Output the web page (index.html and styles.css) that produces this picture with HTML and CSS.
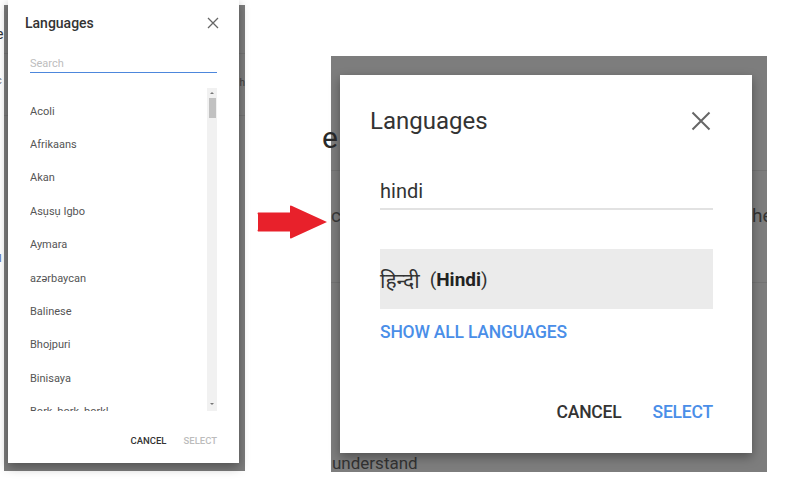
FILE: index.html
```html
<!DOCTYPE html>
<html lang="en">
<head>
<meta charset="utf-8">
<title>Languages dialog</title>
<link rel="stylesheet" href="styles.css">
</head>
<body>
<main class="stage">
  <span class="scrap scrap-e">e</span>
  <span class="scrap scrap-c">c</span>
  <span class="scrap scrap-blue">l</span>

  <section class="shot shot-small">
    <div class="backdrop backdrop-small">
      <span class="rule rule-s1"></span>
      <span class="rule rule-s2"></span>
      <span class="scrap scrap-he-small">h</span>
      <div class="dialog dialog-small">
        <header class="sd-head">
          <h2 class="sd-title">Languages</h2>
          <svg class="sd-close" width="12" height="12" viewBox="0 0 12 12" aria-hidden="true"><path d="M1 1L11 11M11 1L1 11" stroke="#666" stroke-width="1.3" fill="none"/></svg>
        </header>
        <div class="sd-search">Search</div>
        <div class="sd-listwrap">
          <ul class="sd-list">
            <li>Acoli</li>
            <li>Afrikaans</li>
            <li>Akan</li>
            <li>Asụsụ Igbo</li>
            <li>Aymara</li>
            <li>azərbaycan</li>
            <li>Balinese</li>
            <li>Bhojpuri</li>
            <li>Binisaya</li>
            <li>Bork, bork, bork!</li>
          </ul>
          <div class="sd-scrollbar">
            <span class="sb-up"></span>
            <span class="sb-thumb"></span>
            <span class="sb-down"></span>
          </div>
        </div>
        <footer class="sd-foot">
          <span class="sd-btn sd-cancel">CANCEL</span>
          <span class="sd-btn sd-select">SELECT</span>
        </footer>
      </div>
    </div>
  </section>

  <div class="arrow">
    <svg width="70" height="34" viewBox="0 0 70 34" aria-hidden="true">
      <path d="M1 9.5 Q0 8.5 1 7.5 L33 7.5 L33 1.5 Q33 0 34.5 0.8 L70 17 L34.5 33.2 Q33 34 33 32.5 L33 26.5 L1 26.5 Q0 25.5 1 24.5 Z" fill="#e8212b"/>
    </svg>
  </div>

  <section class="shot shot-large">
    <div class="backdrop backdrop-large">
      <span class="rule rule-l1"></span>
      <span class="rule rule-l2"></span>
      <span class="scrap scrap-big-e">e</span>
      <span class="scrap scrap-big-c">c</span>
      <span class="scrap scrap-big-he">he</span>
      <div class="dialog dialog-large">
        <header class="ld-head">
          <h2 class="ld-title">Languages</h2>
          <svg class="ld-close" width="24" height="24" viewBox="0 0 24 24" aria-hidden="true"><path d="M3.5 3.5L20.5 20.5M20.5 3.5L3.5 20.5" stroke="#666" stroke-width="2" fill="none"/></svg>
        </header>
        <div class="ld-input">hindi</div>
        <div class="ld-result"><span class="deva">हिन्दी</span>(<b>Hindi</b>)</div>
        <div class="ld-showall">SHOW ALL LANGUAGES</div>
        <footer class="ld-foot">
          <span class="ld-btn ld-cancel">CANCEL</span>
          <span class="ld-btn ld-select">SELECT</span>
        </footer>
      </div>
      <span class="understand">understand</span>
    </div>
  </section>
</main>
</body>
</html>
```
FILE: styles.css
```css
* { box-sizing: border-box; }
html, body { margin: 0; padding: 0; background: #fff; }
body {
  width: 785px;
  height: 486px;
  overflow: hidden;
  font-family: Roboto, "Noto Sans", "Liberation Sans", sans-serif;
}
.stage {
  position: relative;
  display: flex;
  align-items: flex-start;
  width: 785px;
  height: 486px;
}
h2 { margin: 0; font-weight: 400; }
ul { margin: 0; padding: 0; list-style: none; }

/* ---------- backdrop scraps (obscured page) ---------- */
.scrap { position: absolute; color: #333; white-space: nowrap; }
.scrap-e { left: -4px; top: 26px; font-size: 14px; }
.scrap-c { left: -4px; top: 74px; font-size: 11px; color: #777; }
.scrap-blue { left: -1px; top: 252px; font-size: 11px; color: #4a6fb0; }
.rule { position: absolute; left: 0; right: 0; height: 1px; background: #737373; }
.rule-s1 { top: 48px; }
.rule-s2 { top: 110px; }
.scrap-he-small { right: 0; top: 72px; font-size: 10px; color: #3c3c3c; }
.rule-l1 { top: 114px; }
.rule-l2 { top: 226px; }
.scrap-big-e { left: -9px; top: 64px; font-size: 30px; color: #2a2a2a; }
.scrap-big-c { left: 0; top: 148px; font-size: 19px; color: #3a3a3a; }
.scrap-big-he {
  right: 0;
  top: 148px;
  width: 15px;
  overflow: hidden;
  font-size: 19px;
  color: #333;
}

/* ---------- shots ---------- */
.shot { flex: none; }
.backdrop {
  position: relative;
  display: flow-root;
  background: #7d7d7d;
}
.shot-small { margin-left: 4px; margin-top: 5px; }
.backdrop-small { width: 241px; height: 466px; }
.shot-large { margin-left: 4px; margin-top: 56px; }
.backdrop-large { width: 436px; height: 416px; }

.dialog {
  position: relative;
  background: #fff;
  box-shadow: 0 4px 10px rgba(0,0,0,0.35);
  display: flex;
  flex-direction: column;
}

/* ---------- small dialog ---------- */
.dialog-small {
  width: 231px;
  height: 463px;
  margin-left: 4px;
  margin-top: -5px;
  padding: 0 22px;
}
.sd-head {
  height: 46px;
  display: flex;
  align-items: center;
  justify-content: space-between;
  margin: 0 -2px 0 -5px;
}
.sd-title { font-size: 14px; line-height: 16px; color: #333; font-weight: 500; }
.sd-close { display: block; }
.sd-search {
  margin-top: 11px;
  font-size: 11px;
  line-height: 13px;
  color: #bdbdbd;
  padding-bottom: 2px;
  border-bottom: 1px solid #4d87dc;
}
.sd-listwrap {
  margin-top: 15px;
  height: 323px;
  display: flex;
  overflow: hidden;
}
.sd-list { flex: 1; padding-top: 6.5px; }
.sd-list li {
  height: 33.4px;
  display: flex;
  align-items: center;
  font-size: 11px;
  color: #555;
}
.sd-scrollbar {
  position: relative;
  width: 10px;
  background: #f1f1f1;
  flex: none;
}
.sb-thumb {
  position: absolute;
  left: 1.5px;
  top: 10px;
  width: 7px;
  height: 20px;
  background: #c1c1c1;
}
.sb-up, .sb-down {
  position: absolute;
  left: 3px;
  width: 0;
  height: 0;
  border-left: 2px solid transparent;
  border-right: 2px solid transparent;
}
.sb-up { top: 4px; border-bottom: 2px solid #777; }
.sb-down { bottom: 6px; border-top: 2px solid #777; }
.sd-foot {
  margin-top: 24px;
  display: flex;
  justify-content: flex-end;
  gap: 17px;
}
.sd-btn { font-size: 9.5px; line-height: 11px; font-weight: 500; }
.sd-cancel { color: #333; }
.sd-select { color: #bcbcbc; }

/* ---------- large dialog ---------- */
.dialog-large {
  width: 412px;
  height: 378px;
  margin-left: 9px;
  margin-top: 19px;
  padding: 0 39px 0 40px;
  z-index: 1;
}
.ld-head {
  margin-top: 32px;
  margin-left: -10px;
  height: 28px;
  display: flex;
  align-items: center;
  justify-content: space-between;
}
.ld-title { font-size: 24px; line-height: 28px; color: #333; }
.ld-close { display: block; }
.ld-input {
  margin-top: 44px;
  font-size: 20px;
  line-height: 24px;
  color: #333;
  padding-bottom: 5px;
  border-bottom: 2px solid #e2e2e2;
}
.ld-result {
  margin-top: 39px;
  height: 60px;
  background: #ebebeb;
  display: flex;
  align-items: center;
  font-size: 19px;
  color: #333;
  padding-top: 1px;
}
.ld-result b { font-weight: 700; color: #222; }
.deva {
  font-family: "Noto Sans", "Noto Sans Devanagari", sans-serif;
  font-size: 21px;
  margin-right: 10px;
}
.ld-showall {
  margin-top: 13px;
  font-size: 17.5px;
  line-height: 20px;
  font-weight: 500;
  color: #4a8ee8;
  letter-spacing: -0.2px;
}
.ld-foot {
  margin-top: 60px;
  display: flex;
  justify-content: flex-end;
  gap: 31px;
}
.ld-btn { font-size: 17.5px; line-height: 20px; font-weight: 500; letter-spacing: -0.2px; }
.ld-cancel { color: #333; }
.ld-select { color: #4a8ee8; }

.understand {
  position: absolute;
  left: 1px;
  bottom: -1px;
  font-size: 17px;
  line-height: 20px;
  color: #333;
}

/* ---------- arrow ---------- */
.arrow {
  flex: none;
  margin-left: 12px;
  margin-top: 205px;
  width: 70px;
  height: 34px;
}
.arrow svg { display: block; }
```
